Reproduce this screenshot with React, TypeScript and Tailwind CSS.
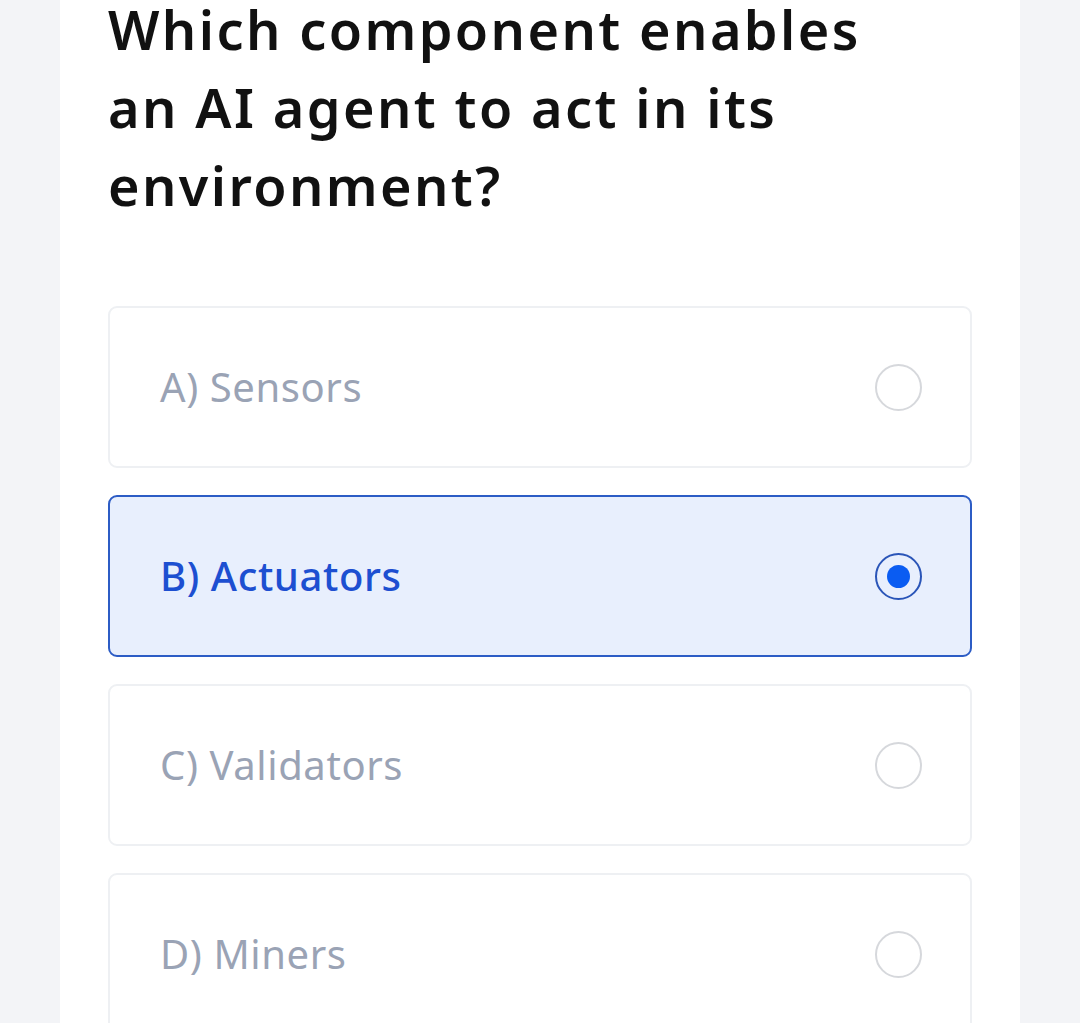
import React from "react";

const options = [
  { label: "A) Sensors", selected: false },
  { label: "B) Actuators", selected: true },
  { label: "C) Validators", selected: false },
  { label: "D) Miners", selected: false },
];

export default function App() {
  return (
    <div className="w-[1080px] h-[1023px] overflow-hidden bg-[#f3f4f7] flex justify-center">
      <div
        className="w-[960px] bg-white px-[48px] pt-0 flex flex-col"
        style={{ fontFamily: "'Noto Sans', Lato, sans-serif" }}
      >
        <h1 className="mt-[-10px] text-[54px] leading-[78px] font-semibold text-[#111111] tracking-[2.4px]">
          Which component enables
          <br />
          an AI agent to act in its
          <br />
          environment?
        </h1>
        <div className="mt-[82px] flex flex-col gap-[27px]">
          {options.map((o) => (
            <div
              key={o.label}
              className={
                o.selected
                  ? "h-[162px] shrink-0 rounded-[9px] border-2 border-[#2c5cc5] bg-[#e8effd] flex items-center justify-between pl-[50px] pr-[48px]"
                  : "h-[162px] shrink-0 rounded-[9px] border-2 border-[#eef0f3] bg-white flex items-center justify-between pl-[50px] pr-[48px]"
              }
            >
              <span
                className={
                  o.selected
                    ? "text-[40px] tracking-[0.6px] text-[#1d4fd1] font-medium"
                    : "text-[40px] tracking-[0.6px] text-[#9aa3b5]"
                }
              >
                {o.label}
              </span>
              {o.selected ? (
                <span className="w-[47px] h-[47px] rounded-full border-[2.5px] border-[#2a55b8] flex items-center justify-center">
                  <span className="w-[23px] h-[23px] rounded-full bg-[#0a5cf2]" />
                </span>
              ) : (
                <span className="w-[47px] h-[47px] rounded-full border-[2.5px] border-[#d6d8dc]" />
              )}
            </div>
          ))}
        </div>
      </div>
    </div>
  );
}
